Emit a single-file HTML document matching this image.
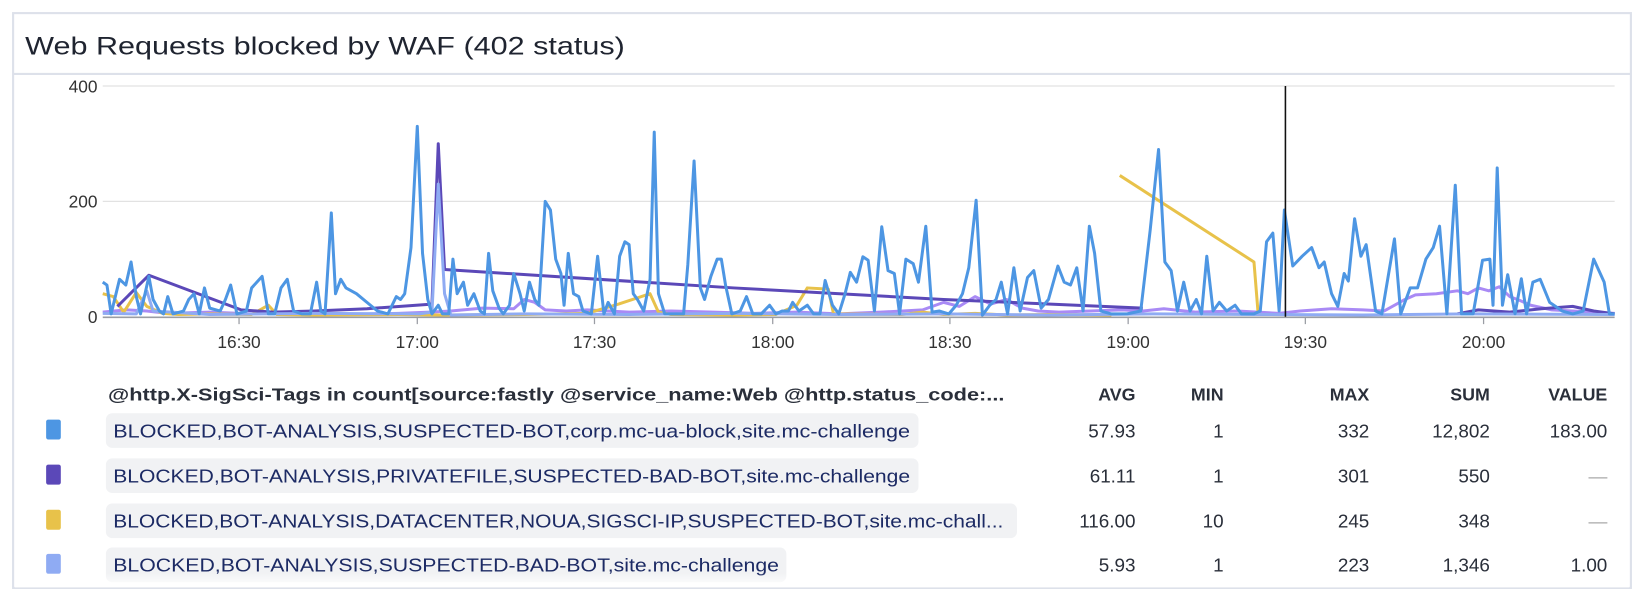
<!DOCTYPE html>
<html><head><meta charset="utf-8"><style>html,body{margin:0;padding:0;background:#fff;}svg{display:block}</style></head>
<body>
<svg width="1644" height="600" viewBox="0 0 1568 572" preserveAspectRatio="none" xmlns="http://www.w3.org/2000/svg" font-family="'Liberation Sans', sans-serif">
<defs>
<linearGradient id="fade" x1="0" y1="0" x2="0" y2="1"><stop offset="0" stop-color="#fff" stop-opacity="0"/><stop offset="1" stop-color="#fff" stop-opacity="1"/></linearGradient>
</defs>
<rect x="12.5" y="12.5" width="1543" height="548" fill="#fff" stroke="#dde1ea" stroke-width="2"/>
<line x1="13" y1="70.5" x2="1555" y2="70.5" stroke="#dde1ea" stroke-width="2"/>
<text x="24" y="52" font-size="24" fill="#1f2430" textLength="572" lengthAdjust="spacingAndGlyphs">Web Requests blocked by WAF (402 status)</text>

<line x1="98" y1="82" x2="1540" y2="82" stroke="#e2e2e2" stroke-width="1.2"/>
<line x1="98" y1="192" x2="1540" y2="192" stroke="#e2e2e2" stroke-width="1.2"/>
<line x1="98" y1="302.5" x2="1540" y2="302.5" stroke="#9a9da4" stroke-width="1.5"/>
<g font-size="16.5" fill="#333" text-anchor="end">
<text x="93" y="88">400</text><text x="93" y="198">200</text><text x="93" y="308">0</text>
</g>
<g stroke="#9a9da4" stroke-width="1.2">
<line x1="228" y1="302" x2="228" y2="309"/><line x1="398" y1="302" x2="398" y2="309"/><line x1="567" y1="302" x2="567" y2="309"/><line x1="737" y1="302" x2="737" y2="309"/><line x1="906" y1="302" x2="906" y2="309"/><line x1="1076" y1="302" x2="1076" y2="309"/><line x1="1245" y1="302" x2="1245" y2="309"/><line x1="1415" y1="302" x2="1415" y2="309"/>
</g>
<g font-size="16.5" fill="#333" text-anchor="middle">
<text x="228" y="332">16:30</text><text x="398" y="332">17:00</text><text x="567" y="332">17:30</text><text x="737" y="332">18:00</text><text x="906" y="332">18:30</text><text x="1076" y="332">19:00</text><text x="1245" y="332">19:30</text><text x="1415" y="332">20:00</text>
</g>

<g transform="translate(0,302) scale(1,-0.55)" fill="none" stroke-linejoin="round">
<polyline vector-effect="non-scaling-stroke" stroke="#a98af5" stroke-width="3" points="98,8 120,12 140,10 160,6 200,8 240,5 280,8 330,4 380,6 410,8 430,10 460,15 490,14 500,30 510,25 520,12 540,10 560,12 600,8 640,10 680,8 720,6 760,8 800,5 840,8 880,12 900,25 915,18 930,35 945,22 960,30 975,15 990,10 1010,8 1040,10 1070,12 1090,10 1110,14 1140,8 1180,10 1220,6 1240,10 1270,14 1300,12 1320,10 1340,30 1350,38 1370,40 1390,45 1400,40 1410,50 1420,45 1430,52 1440,35 1450,28 1460,20 1480,12 1500,10 1540,6"/>
<polyline vector-effect="non-scaling-stroke" stroke="#e8c24a" stroke-width="3" points="98,40 108,35 118,8 130,42 140,18 155,6 170,4 200,5 240,4 256,20 264,4 300,3 380,4 420,3 500,4 560,6 590,22 620,40 628,8 640,4 700,3 740,4 760,20 770,50 790,48 795,5 860,4 880,8 900,4 930,6 960,3 1000,4 1060,3"/>
<polyline vector-effect="non-scaling-stroke" stroke="#e8c24a" stroke-width="3" points="1068,245 1196,95 1200,5"/>
<polyline vector-effect="non-scaling-stroke" stroke="#5b48b8" stroke-width="3" points="112,18 142,72 230,12 260,8 300,10 350,14 412,22 418,300 424,82 700,50 900,30 1090,15"/>
<polyline vector-effect="non-scaling-stroke" stroke="#5b48b8" stroke-width="3" points="1390,5 1410,12 1440,8 1470,14 1500,18 1520,10 1540,5"/>
<polyline vector-effect="non-scaling-stroke" stroke="#8fabf3" stroke-width="3" points="98,6 130,5 140,45 146,10 200,4 300,6 400,5 412,8 418,230 424,40 430,3 500,5 600,4 700,6 800,4 900,5 1000,3 1100,5 1200,4 1300,3 1400,5 1540,4"/>
<polyline vector-effect="non-scaling-stroke" stroke="#4d96e3" stroke-width="3" points="98,60 102,55 106,5 114,65 120,55 125,95 130,35 134,5 142,70 146,30 152,10 156,5 160,35 165,5 175,10 180,30 185,40 190,5 195,50 200,15 210,10 215,30 220,55 226,5 235,10 240,50 245,60 250,70 256,5 262,5 268,50 274,65 280,10 288,5 296,5 302,60 306,10 310,5 316,180 320,40 325,65 330,50 340,40 350,25 360,10 370,5 378,35 382,30 386,40 392,120 398,330 403,110 408,30 412,5 418,20 422,5 428,5 432,100 436,40 442,60 446,20 452,40 458,10 462,5 466,110 470,45 476,15 480,5 486,20 490,75 496,40 500,10 505,60 510,30 514,20 520,200 525,185 530,100 535,75 538,20 542,110 547,40 552,35 556,10 564,5 570,105 576,5 580,25 586,5 591,105 596,130 600,125 604,40 608,30 614,10 620,65 624,320 628,40 634,5 640,5 646,5 652,5 656,90 662,270 668,50 672,30 678,70 684,100 688,100 692,55 698,5 706,10 712,35 718,5 726,5 734,20 740,5 746,10 752,10 756,25 762,10 770,20 776,5 782,5 787,63 794,20 800,5 806,40 811,77 817,60 823,104 828,98 834,10 841,156 847,80 853,75 858,5 864,100 871,92 876,60 883,157 889,8 896,10 905,5 912,20 918,40 924,85 931,202 937,3 944,20 950,30 955,60 961,5 967,85 973,10 980,68 986,80 993,15 1000,30 1009,88 1015,60 1021,55 1027,85 1033,10 1039,157 1044,110 1050,10 1060,5 1075,5 1088,10 1097,150 1105,290 1111,95 1117,80 1123,10 1129,60 1135,10 1141,30 1146,5 1151,105 1157,10 1163,25 1170,10 1178,20 1184,5 1196,5 1202,10 1208,130 1214,145 1220,10 1225,185 1233,88 1242,105 1251,120 1258,85 1263,95 1270,40 1276,18 1282,75 1286,62 1292,170 1298,105 1303,125 1312,10 1318,5 1330,135 1336,5 1345,50 1352,50 1360,100 1367,120 1373,157 1380,5 1388,228 1394,5 1405,5 1414,98 1421,100 1424,20 1428,258 1433,20 1438,73 1445,5 1451,66 1456,5 1462,60 1469,65 1478,25 1490,10 1500,5 1510,10 1520,100 1530,60 1535,5 1540,5"/>
</g>
<line x1="1226" y1="82" x2="1226" y2="302" stroke="#111" stroke-width="1.5"/>

<g font-size="17" font-weight="bold" fill="#2a2f3a">
<text x="103" y="382" textLength="855" lengthAdjust="spacingAndGlyphs">@http.X-SigSci-Tags in count[source:fastly @service_name:Web @http.status_code:...</text>
<g text-anchor="end"><text x="1083" y="382">AVG</text><text x="1167" y="382">MIN</text><text x="1306" y="382">MAX</text><text x="1421" y="382">SUM</text><text x="1533" y="382">VALUE</text></g>
</g>
<rect x="44" y="400" width="14" height="19" rx="2" fill="#4d96e3"/>
<rect x="44" y="443" width="14" height="19" rx="2" fill="#5b48b8"/>
<rect x="44" y="486" width="14" height="19" rx="2" fill="#e8c24a"/>
<rect x="44" y="528" width="14" height="19" rx="2" fill="#8fabf3"/>
<rect x="101" y="394" width="775" height="33" rx="6" fill="#f1f2f4"/>
<rect x="101" y="437" width="775" height="33" rx="6" fill="#f1f2f4"/>
<rect x="101" y="480" width="869" height="33" rx="6" fill="#f1f2f4"/>
<rect x="101" y="522" width="649" height="33" rx="6" fill="#f1f2f4"/>
<g font-size="18" fill="#1c2a64">
<text x="108" y="417" textLength="760" lengthAdjust="spacingAndGlyphs">BLOCKED,BOT-ANALYSIS,SUSPECTED-BOT,corp.mc-ua-block,site.mc-challenge</text>
<text x="108" y="460" textLength="760" lengthAdjust="spacingAndGlyphs">BLOCKED,BOT-ANALYSIS,PRIVATEFILE,SUSPECTED-BAD-BOT,site.mc-challenge</text>
<text x="108" y="503" textLength="849" lengthAdjust="spacingAndGlyphs">BLOCKED,BOT-ANALYSIS,DATACENTER,NOUA,SIGSCI-IP,SUSPECTED-BOT,site.mc-chall...</text>
<text x="108" y="545" textLength="635" lengthAdjust="spacingAndGlyphs">BLOCKED,BOT-ANALYSIS,SUSPECTED-BAD-BOT,site.mc-challenge</text>
</g>
<g font-size="18" fill="#2a2f3a" text-anchor="end">
<text x="1083" y="417">57.93</text><text x="1167" y="417">1</text><text x="1306" y="417">332</text><text x="1421" y="417">12,802</text><text x="1533" y="417">183.00</text>
<text x="1083" y="460">61.11</text><text x="1167" y="460">1</text><text x="1306" y="460">301</text><text x="1421" y="460">550</text><text x="1533" y="460" fill="#aaa">—</text>
<text x="1083" y="503">116.00</text><text x="1167" y="503">10</text><text x="1306" y="503">245</text><text x="1421" y="503">348</text><text x="1533" y="503" fill="#aaa">—</text>
<text x="1083" y="545">5.93</text><text x="1167" y="545">1</text><text x="1306" y="545">223</text><text x="1421" y="545">1,346</text><text x="1533" y="545">1.00</text>
</g>
<rect x="14" y="546" width="1540" height="14" fill="url(#fade)"/>
</svg>
</body></html>
